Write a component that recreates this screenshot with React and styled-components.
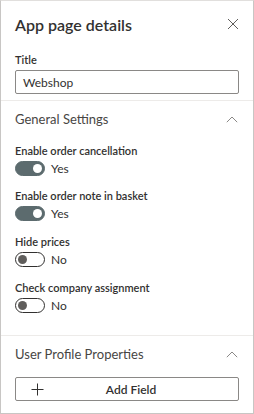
import React from "react";
import styled, { createGlobalStyle } from "styled-components";

const Global = createGlobalStyle`
  html, body { margin: 0; padding: 0; background: #fff; }
  body { font-family: Lato, "Open Sans", sans-serif; color: #323130; }
  * { box-sizing: border-box; }
`;

const Panel = styled.div`
  width: 254px;
  height: 414px;
  border: 1px solid #c8c6c4;
  border-top-color: #e1dfdd;
  background: #fff;
  display: flex;
  flex-direction: column;
  overflow: hidden;
`;

const Header = styled.div`
  display: flex;
  align-items: center;
  justify-content: space-between;
  padding: 0 14px 1px 14px;
  height: 47px;
`;

const Heading = styled.h1`
  margin: 0;
  font-size: 16px;
  font-weight: 600;
  color: #323130;
`;

const IconButton = styled.button`
  border: none;
  background: none;
  padding: 0;
  width: 12px;
  height: 12px;
  display: flex;
  align-items: center;
  justify-content: center;
`;

const Section = styled.div`
  padding: ${(p) => p.$pad || "0 14px"};
  border-bottom: ${(p) => (p.$divider ? "1px solid #edebe9" : "none")};
  display: flex;
  flex-direction: column;
`;

const Label = styled.div`
  font-size: 11px;
  font-weight: 600;
  color: #323130;
  line-height: 16px;
  margin-bottom: 2px;
`;

const Input = styled.div`
  height: 24px;
  border: 1px solid #8a8886;
  border-radius: 2px;
  font-size: 12px;
  padding: 0 7px;
  display: flex;
  align-items: center;
  color: #323130;
`;

const GroupHeader = styled.div`
  display: flex;
  align-items: center;
  justify-content: space-between;
  height: 36px;
  padding-right: 1px;
  font-size: 13px;
  color: #484644;
  margin-bottom: ${(p) => p.$mb || "6px"};
`;

const Field = styled.div`
  display: flex;
  flex-direction: column;
  margin-bottom: ${(p) => p.$mb || "13px"};
`;

const ToggleRow = styled.div`
  display: flex;
  align-items: center;
  gap: 6px;
  font-size: 12px;
  color: #323130;
  height: 15px;
`;

const Track = styled.span`
  width: 30px;
  height: 15px;
  border-radius: 8px;
  border: 1px solid ${(p) => (p.$on ? "#5c6b6e" : "#323130")};
  background: ${(p) => (p.$on ? "#5c6b6e" : "#fff")};
  display: flex;
  align-items: center;
  justify-content: ${(p) => (p.$on ? "flex-end" : "flex-start")};
  padding: 0 2px;
`;

const Thumb = styled.span`
  width: 9px;
  height: 9px;
  border-radius: 50%;
  background: ${(p) => (p.$on ? "#fff" : "#605e5c")};
`;

const AddButton = styled.button`
  height: 24px;
  border: 1px solid #8a8886;
  border-radius: 2px;
  background: #fff;
  display: flex;
  align-items: center;
  padding: 0 0 0 15px;
  font-family: inherit;
  font-size: 12px;
  font-weight: 600;
  color: #323130;
`;

const AddText = styled.span`
  flex: 1;
  text-align: center;
  padding-right: 20px;
`;

const Close = () => (
  <svg width="12" height="12" viewBox="0 0 12 12">
    <path d="M1 1L11 11M11 1L1 11" stroke="#605e5c" strokeWidth="1" fill="none" />
  </svg>
);

const ChevronUp = () => (
  <svg width="12" height="7" viewBox="0 0 12 7">
    <path d="M0.8 6.2L6 1L11.2 6.2" stroke="#8a8886" strokeWidth="1" fill="none" />
  </svg>
);

const Plus = () => (
  <svg width="13" height="13" viewBox="0 0 13 13">
    <path d="M6.5 0.5V12.5M0.5 6.5H12.5" stroke="#323130" strokeWidth="1" fill="none" />
  </svg>
);

const Toggle = ({ on }) => (
  <ToggleRow>
    <Track $on={on}>
      <Thumb $on={on} />
    </Track>
    {on ? "Yes" : "No"}
  </ToggleRow>
);

const settings = [
  { label: "Enable order cancellation", on: true, mb: "12px" },
  { label: "Enable order note in basket", on: true },
  { label: "Hide prices", on: false },
  { label: "Check company assignment", on: false, mb: "12px" },
];

export default function App() {
  return (
    <>
      <Global />
      <Panel>
        <Header>
          <Heading>App page details</Heading>
          <IconButton aria-label="Close">
            <Close />
          </IconButton>
        </Header>
        <Section $divider $pad="4px 14px 6px 14px">
          <Label>Title</Label>
          <Input>Webshop</Input>
        </Section>
        <Section $divider $pad="0 14px 10px 14px">
          <GroupHeader>
            General Settings
            <ChevronUp />
          </GroupHeader>
          {settings.map((s) => (
            <Field key={s.label} $mb={s.mb}>
              <Label>{s.label}</Label>
              <Toggle on={s.on} />
            </Field>
          ))}
        </Section>
        <Section>
          <GroupHeader $mb="5px">
            User Profile Properties
            <ChevronUp />
          </GroupHeader>
          <AddButton>
            <Plus />
            <AddText>Add Field</AddText>
          </AddButton>
        </Section>
      </Panel>
    </>
  );
}
